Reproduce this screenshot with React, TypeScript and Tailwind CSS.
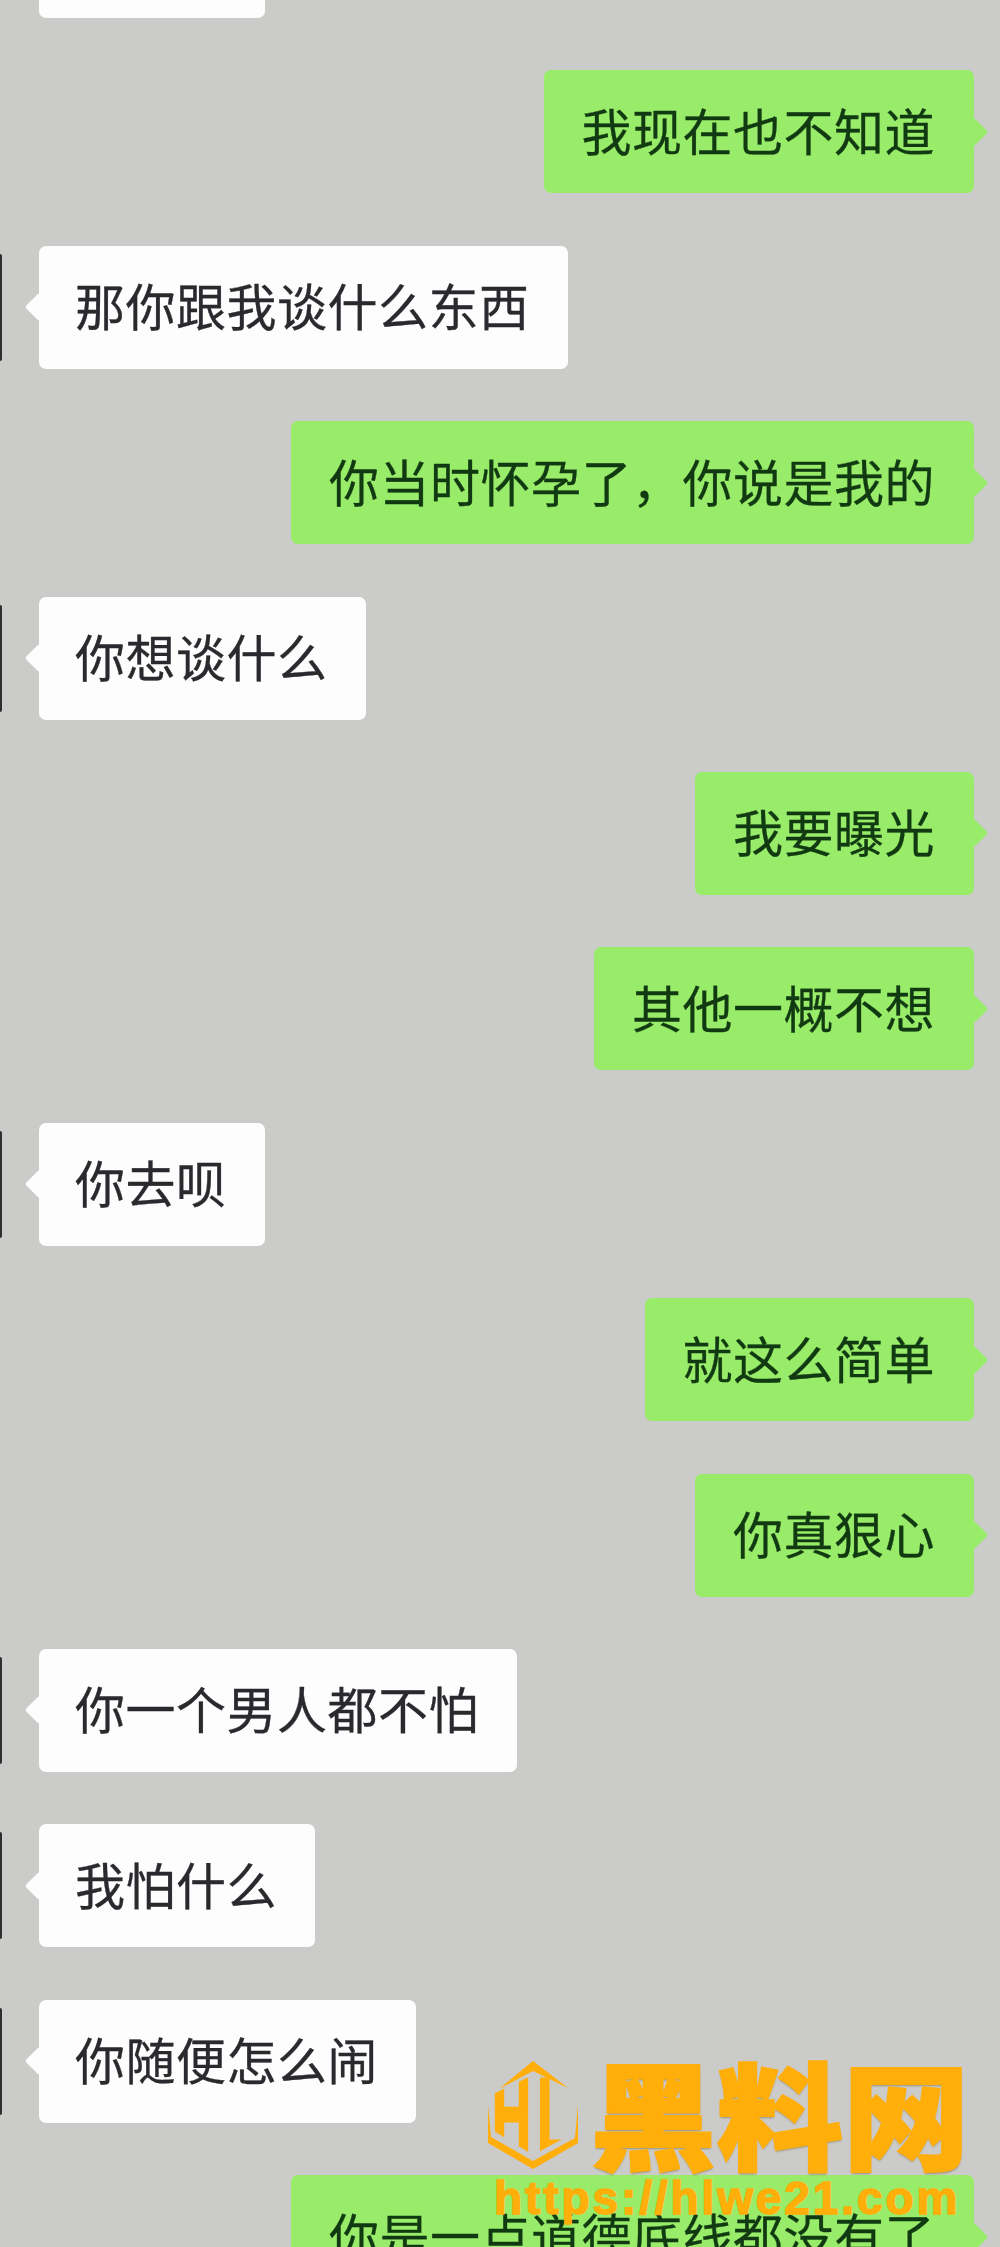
const CJK = "font-['Noto_Sans_CJK_SC','Noto_Sans',sans-serif]";

type Msg = { text: string; me?: boolean; avatar?: boolean };

const messages: Msg[] = [
  { text: "你去呗" },
  { text: "我现在也不知道", me: true },
  { text: "那你跟我谈什么东西", avatar: true },
  { text: "你当时怀孕了，你说是我的", me: true },
  { text: "你想谈什么", avatar: true },
  { text: "我要曝光", me: true },
  { text: "其他一概不想", me: true },
  { text: "你去呗", avatar: true },
  { text: "就这么简单", me: true },
  { text: "你真狠心", me: true },
  { text: "你一个男人都不怕", avatar: true },
  { text: "我怕什么", avatar: true },
  { text: "你随便怎么闹", avatar: true },
  { text: "你是一点道德底线都没有了", me: true },
];

function Bubble({ text, me, avatar }: Msg) {
  if (me) {
    return (
      <div className="flex h-[123px] shrink-0 justify-end pr-[26px]">
        <div className="relative flex items-center rounded-[7px] bg-[#98ec69] pr-[39px] pb-[6px] pl-[38px] text-[50px] leading-none tracking-[0.5px] text-[#123a12] [-webkit-text-stroke:0.3px_#123a12]">
          {text}
          <span className="absolute top-1/2 left-full h-[20px] w-[20px] -translate-x-[10px] -translate-y-1/2 rotate-45 rounded-[2px] bg-[#98ec69]" />
        </div>
      </div>
    );
  }
  return (
    <div className="relative flex h-[123px] shrink-0 pl-[39px]">
      {avatar && <span className="absolute top-[8px] left-0 h-[107px] w-[2px] rounded-r-[2px] bg-[#2e2e30]" />}
      <div className="relative flex items-center rounded-[7px] bg-[#fdfdfd] pr-[38px] pb-[6px] pl-[36px] text-[50px] leading-none tracking-[0.5px] text-[#2a2a2e] [-webkit-text-stroke:0.3px_#2a2a2e]">
        {text}
        <span className="absolute top-1/2 right-full h-[20px] w-[20px] translate-x-[10px] -translate-y-1/2 rotate-45 rounded-[2px] bg-[#fdfdfd]" />
      </div>
    </div>
  );
}

function LogoMark() {
  const letter = {
    fontFamily: "Liberation Sans, sans-serif",
    fontWeight: 700,
    fontSize: 108,
    fill: "#ffae0a",
    stroke: "#ffae0a",
    strokeWidth: 3,
    lengthAdjust: "spacingAndGlyphs",
  } as const;
  return (
    <svg width="92" height="110" viewBox="16 14 92 110" className="mt-[8px] shrink-0">
      <defs>
        <clipPath id="hl-clip">
          <polygon points="18,50 62,29 80,29 104,60 104,86 62,109 23,85" />
        </clipPath>
      </defs>
      <polygon points="62,15 97,42 62,25 28,43" fill="#ffae0a" />
      <polygon points="17,59 17,97 62,123 107,97 107,58 104,92 62,115 20,91" fill="#ffae0a" />
      <g clipPath="url(#hl-clip)">
        <text x="21" y="107" textLength="39" {...letter}>
          H
        </text>
        <text x="66" y="107" textLength="34" {...letter}>
          L
        </text>
      </g>
    </svg>
  );
}

function Watermark() {
  return (
    <div className="absolute top-[2052px] left-[487px] w-[490px]">
      <div className="flex items-start">
        <LogoMark />
        <span className={`${CJK} ml-[11px] inline-block origin-left scale-x-[1.09] text-[116px] leading-none font-black whitespace-nowrap text-[#ffae0a] [-webkit-text-stroke:2px_#ffae0a] [text-shadow:0_2px_2px_rgba(120,100,50,0.55)]`}>
          黑料网
        </span>
      </div>
      <div className="mt-[4px] ml-[7px] font-['Liberation_Sans',sans-serif] text-[46px] leading-[48px] font-bold tracking-[2.9px] whitespace-nowrap text-[#ffae0a] [-webkit-text-stroke:1.5px_#ffae0a]">
        https://hlwe21.com
      </div>
    </div>
  );
}

export default function App() {
  return (
    <div className={`${CJK} relative h-[2247px] w-[1000px] overflow-hidden bg-[#cbcbc9]`}>
      <div className="mt-[-105px] flex flex-col gap-[52.4px] blur-[0.5px]">
        {messages.map((m, i) => (
          <Bubble key={i} {...m} />
        ))}
      </div>
      <Watermark />
    </div>
  );
}
